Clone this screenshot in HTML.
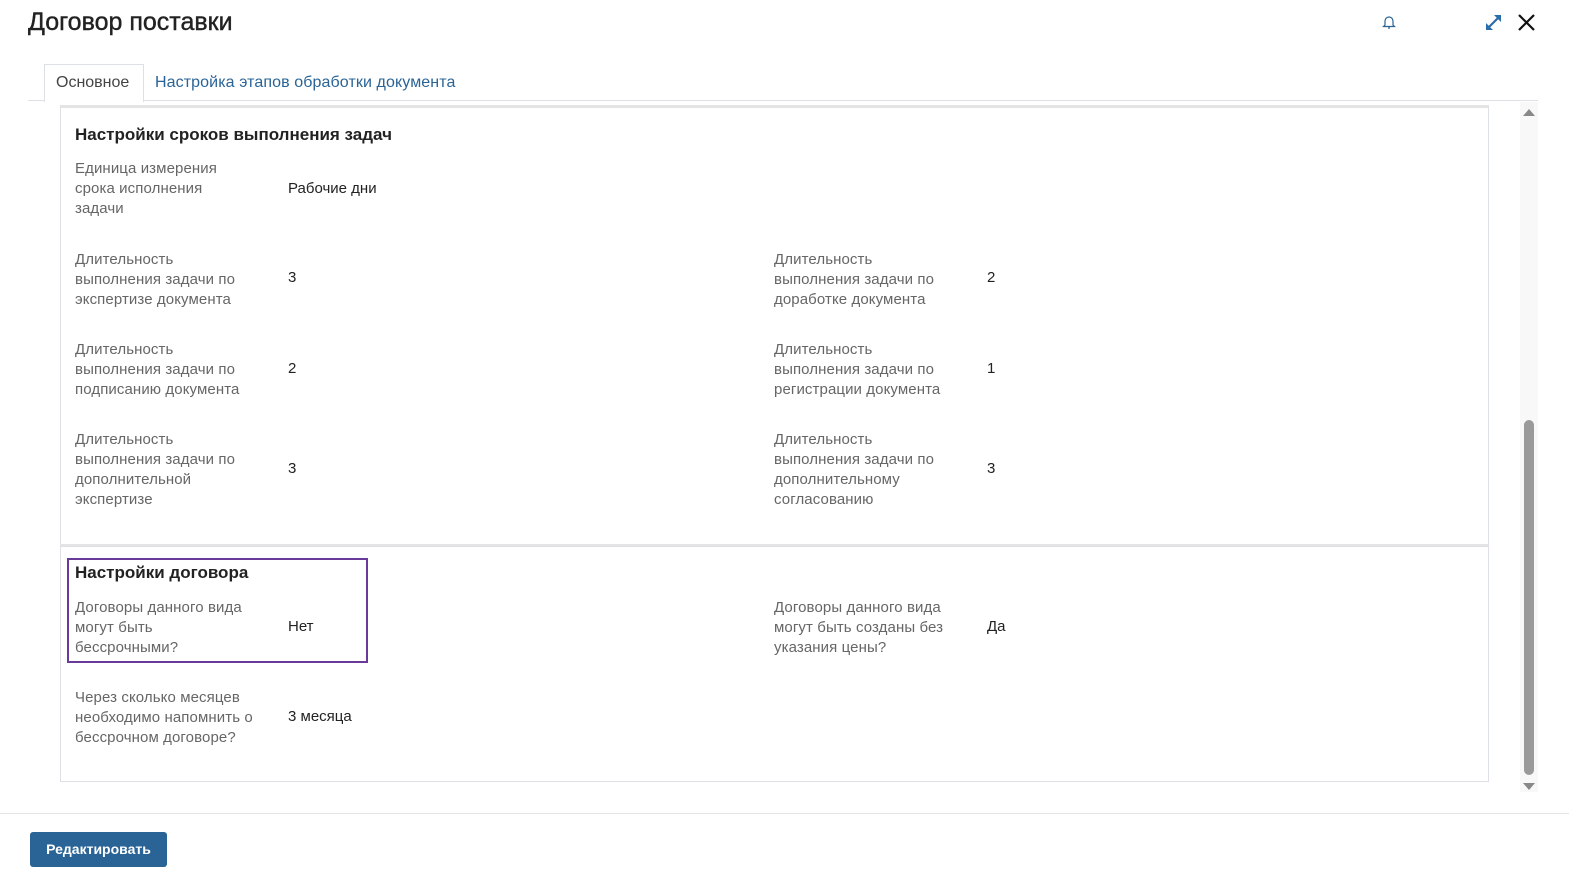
<!DOCTYPE html><html><head><meta charset="utf-8"><style>
body{margin:0;width:1569px;height:883px;background:#fff;font-family:"Liberation Sans",sans-serif;position:relative;overflow:hidden}
.a{position:absolute}
.l{position:absolute;color:#666;font-size:15px;line-height:20px;white-space:nowrap;letter-spacing:0.1px}
.v{position:absolute;color:#222;font-size:15px;line-height:20px}
h2{position:absolute;margin:0;font-size:17px;font-weight:bold;color:#222}
</style></head><body>
<div class="a" style="left:28px;top:8px;font-size:25px;color:#222;-webkit-text-stroke:0.4px #222">Договор поставки</div>
<svg class="a" style="left:1382px;top:14px" width="14" height="16" viewBox="0 0 14 16"><path d="M3 11V7a4 4 0 0 1 8 0v4l1.5 1.5h-11z M6 14h2" fill="none" stroke="#2a6496" stroke-width="1.2"/></svg>
<svg class="a" style="left:1484px;top:13px" width="19" height="19" viewBox="0 0 19 19"><path d="M3 16L16 3" stroke="#2a6da8" stroke-width="2.2"/><path d="M10 2h7v7z M2 10v7h7z" fill="#2a6da8"/></svg>
<svg class="a" style="left:1518px;top:14px" width="17" height="17" viewBox="0 0 17 17"><path d="M1 1L16 16M16 1L1 16" stroke="#111" stroke-width="2.2"/></svg>
<div class="a" style="left:28px;top:100px;width:1510px;height:1px;background:#dde0e4"></div>
<div class="a" style="left:44px;top:64px;width:98px;height:37px;border:1px solid #dde0e4;border-bottom:none;background:#fff"></div>
<div class="a" style="left:56px;top:74px;font-size:16px;color:#444">Основное</div>
<div class="a" style="left:155px;top:74px;font-size:16px;color:#2a6496;letter-spacing:0.1px">Настройка этапов обработки документа</div>
<div class="a" style="left:60px;top:105px;width:1427px;height:438px;border:1px solid #dde0e4;border-top:3px solid #e4e4e4"></div>
<div class="a" style="left:60px;top:544px;width:1427px;height:235px;border:1px solid #dde0e4;border-top:2px solid #e4e4e4"></div>
<h2 style="left:75px;top:125px">Настройки сроков выполнения задач</h2>
<div class="l" style="left:75px;top:159px">Единица измерения<br>срока исполнения<br>задачи</div><div class="v" style="left:288px;top:179px">Рабочие дни</div>
<div class="l" style="left:75px;top:250px">Длительность<br>выполнения задачи по<br>экспертизе документа</div><div class="v" style="left:288px;top:268px">3</div>
<div class="l" style="left:774px;top:250px">Длительность<br>выполнения задачи по<br>доработке документа</div><div class="v" style="left:987px;top:268px">2</div>
<div class="l" style="left:75px;top:340px">Длительность<br>выполнения задачи по<br>подписанию документа</div><div class="v" style="left:288px;top:359px">2</div>
<div class="l" style="left:774px;top:340px">Длительность<br>выполнения задачи по<br>регистрации документа</div><div class="v" style="left:987px;top:359px">1</div>
<div class="l" style="left:75px;top:430px">Длительность<br>выполнения задачи по<br>дополнительной<br>экспертизе</div><div class="v" style="left:288px;top:459px">3</div>
<div class="l" style="left:774px;top:430px">Длительность<br>выполнения задачи по<br>дополнительному<br>согласованию</div><div class="v" style="left:987px;top:459px">3</div>
<h2 style="left:75px;top:563px">Настройки договора</h2>
<div class="a" style="left:67px;top:558px;width:297px;height:101px;border:2px solid #6a3a9a"></div>
<div class="l" style="left:75px;top:598px">Договоры данного вида<br>могут быть<br>бессрочными?</div><div class="v" style="left:288px;top:617px">Нет</div>
<div class="l" style="left:774px;top:598px">Договоры данного вида<br>могут быть созданы без<br>указания цены?</div><div class="v" style="left:987px;top:617px">Да</div>
<div class="l" style="left:75px;top:688px">Через сколько месяцев<br>необходимо напомнить о<br>бессрочном договоре?</div><div class="v" style="left:288px;top:707px">3 месяца</div>
<div class="a" style="left:1520px;top:102px;width:18px;height:690px;background:#f8f8f8"></div>
<div class="a" style="left:1523px;top:109px;width:0;height:0;border-left:6px solid transparent;border-right:6px solid transparent;border-bottom:7px solid #888"></div>
<div class="a" style="left:1523px;top:783px;width:0;height:0;border-left:6px solid transparent;border-right:6px solid transparent;border-top:7px solid #888"></div>
<div class="a" style="left:1524px;top:420px;width:10px;height:355px;background:#9a9a9a;border-radius:5px"></div>
<div class="a" style="left:0;top:813px;width:1569px;height:1px;background:#e4e4e4"></div>
<div class="a" style="left:30px;top:832px;width:137px;height:35px;background:#2a6496;border-radius:3px;color:#fff;font-size:14px;font-weight:bold;line-height:35px;text-align:center">Редактировать</div>
</body></html>
